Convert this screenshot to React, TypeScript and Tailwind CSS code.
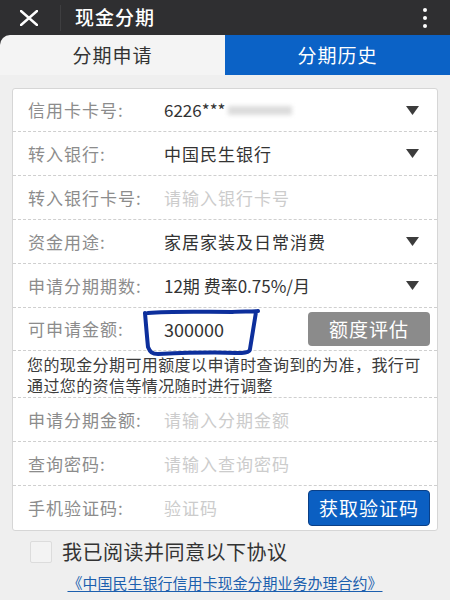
import React from 'react';

const font = { fontFamily: '"Noto Sans CJK SC", "Noto Sans", sans-serif' };

const Caret = () => (
  <svg width="13" height="9" viewBox="0 0 13 9" className="ml-auto mr-[18px] shrink-0">
    <path d="M0 0 L13 0 L6.5 9 Z" fill="#3c3c3c" />
  </svg>
);

const Row: React.FC<{ label: string; children?: React.ReactNode; last?: boolean; h?: string }> = ({ label, children, last, h = 'h-[44px]' }) => (
  <div className={`flex items-center ${h} pl-[15px] ${last ? '' : 'border-b border-dashed border-[#cfcfcf]'}`}>
    <span className="w-[136px] shrink-0 text-[17px] tracking-[1px] text-[#8c8c8c]">{label}</span>
    {children}
  </div>
);

export default function App() {
  return (
    <div className="w-[450px] h-[600px] bg-[#efefef] overflow-hidden" style={font}>
      {/* title bar */}
      <div className="h-[35px] bg-[#2f2f31] flex items-center">
        <svg width="18" height="16" viewBox="0 0 18 16" className="ml-[20px]">
          <path d="M1 1 L17 15 M17 1 L1 15" stroke="#fff" strokeWidth="2.4" strokeLinecap="round" />
        </svg>
        <div className="w-px h-[26px] bg-[#3e3e40] ml-[22px]" />
        <span className="ml-[14px] text-[19px] tracking-[1px] text-white font-medium">现金分期</span>
        <div className="ml-auto mr-[23px] flex flex-col gap-[4px]">
          <div className="w-[4px] h-[4px] rounded-full bg-white" />
          <div className="w-[4px] h-[4px] rounded-full bg-white" />
          <div className="w-[4px] h-[4px] rounded-full bg-white" />
        </div>
      </div>

      {/* tabs */}
      <div className="flex h-[40px] bg-[#2f2f31]">
        <div className="w-[225px] bg-[#f4f4f4] rounded-tl-[10px] flex items-center justify-center text-[19px] tracking-[1px] text-[#333]">
          分期申请
        </div>
        <div className="flex-1 bg-[#0b62c6] flex items-center justify-center text-[19px] tracking-[1px] text-white">
          分期历史
        </div>
      </div>

      {/* form card */}
      <div className="mx-[12px] mt-[13px] bg-white border border-[#d6d6d6] rounded-[3px]">
        <Row label="信用卡卡号:" h="h-[43px]">
          <span className="text-[17px] text-[#333]">6226***</span>
          <span className="ml-[2px] w-[64px] h-[9px] bg-[#dcdcdc] blur-[2px]" />
          <Caret />
        </Row>
        <Row label="转入银行:">
          <span className="text-[17px] tracking-[1px] text-[#333]">中国民生银行</span>
          <Caret />
        </Row>
        <Row label="转入银行卡号:">
          <span className="text-[17px] tracking-[1px] text-[#cccccc]">请输入银行卡号</span>
        </Row>
        <Row label="资金用途:">
          <span className="text-[17px] tracking-[1px] text-[#333]">家居家装及日常消费</span>
          <Caret />
        </Row>
        <Row label="申请分期期数:">
          <span className="text-[17px] text-[#333]">12期 费率0.75%/月</span>
          <Caret />
        </Row>
        <Row label="可申请金额:" h="h-[43px]">
          <div className="relative">
            <span className="text-[18px] text-[#333]">300000</span>
            <svg width="122" height="48" viewBox="0 0 122 48" className="absolute left-[-22px] top-[-7px] pointer-events-none">
              <path
                d="M6 4 C30 2 60 3 90 3 C100 2 108 3 116 2 M114 3 C112 16 110 28 108 40 C108 44 100 44 94 44 C70 43 40 44 16 45 C10 45 8 43 6 38 C5 28 4 16 3 4"
                fill="none"
                stroke="#0d2f9c"
                strokeWidth="4"
                strokeLinecap="round"
                strokeLinejoin="round"
              />
            </svg>
          </div>
          <button className="ml-auto mr-[7px] w-[122px] h-[34px] rounded-[4px] bg-[#8b8b8b] text-white text-[19px] tracking-[1px]">
            额度评估
          </button>
        </Row>
        <div className="px-[14px] pt-[3px] pb-[6px] h-[47px] border-b border-dashed border-[#cfcfcf] text-[16px] tracking-[0.4px] leading-[21px] text-[#3c3c3c]">
          您的现金分期可用额度以申请时查询到的为准，我行可通过您的资信等情况随时进行调整
        </div>
        <Row label="申请分期金额:">
          <span className="text-[17px] tracking-[1px] text-[#cccccc]">请输入分期金额</span>
        </Row>
        <Row label="查询密码:">
          <span className="text-[17px] tracking-[1px] text-[#cccccc]">请输入查询密码</span>
        </Row>
        <Row label="手机验证码:" last>
          <span className="text-[17px] tracking-[1px] text-[#cccccc]">验证码</span>
          <button className="ml-auto mr-[7px] w-[122px] h-[36px] rounded-[4px] bg-[#0b5fc2] border border-[#0a3f86] text-white text-[19px] tracking-[1px]">
            获取验证码
          </button>
        </Row>
      </div>

      {/* agreement */}
      <div className="flex items-center mt-[6px] ml-[30px]">
        <div className="w-[22px] h-[22px] border border-[#dcdcdc] bg-[#f3f3f3] rounded-[2px]" />
        <span className="ml-[10px] text-[20px] tracking-[0.5px] text-[#333]">我已阅读并同意以下协议</span>
      </div>
      <div className="mt-[3px] text-center">
        <span className="text-[15px] text-[#1c5fae] underline underline-offset-2">《中国民生银行信用卡现金分期业务办理合约》</span>
      </div>
    </div>
  );
}
